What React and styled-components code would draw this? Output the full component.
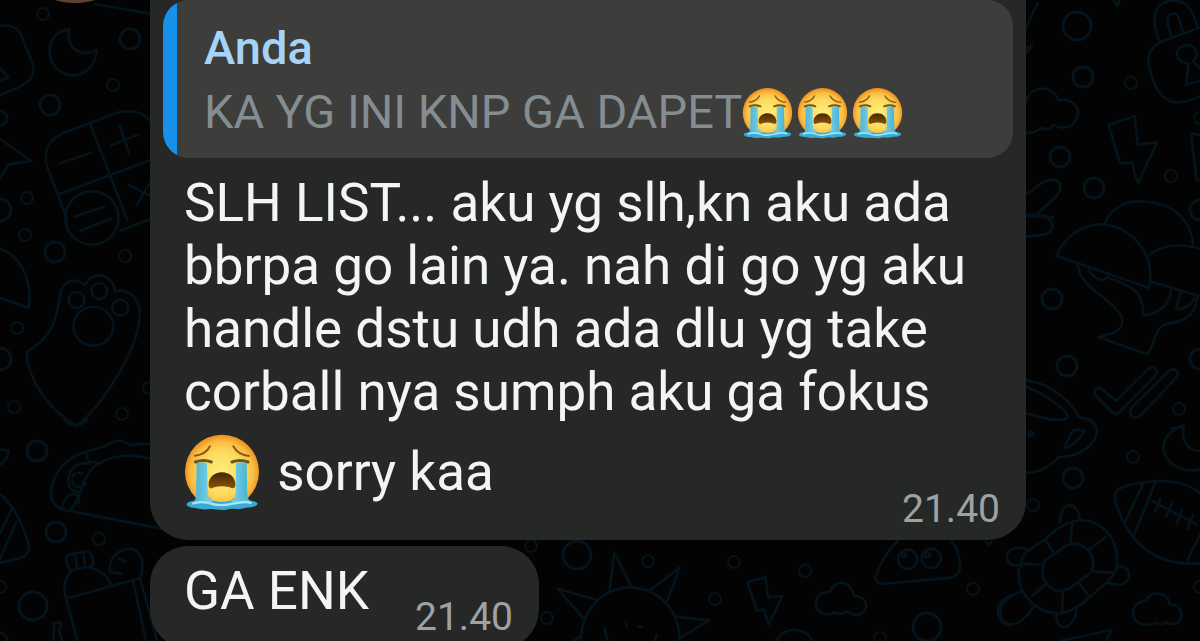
import React from 'react';
import styled, { createGlobalStyle } from 'styled-components';

const GlobalStyle = createGlobalStyle`
  * {
    box-sizing: border-box;
  }
  body {
    margin: 0;
    background-color: #030303;
    font-family: Roboto, 'Liberation Sans', sans-serif;
  }
  p {
    margin: 0;
  }
`;

const Chat = styled.main`
  position: relative;
  height: 100vh;
  overflow: hidden;
`;

const StyledWallpaper = styled.svg`
  position: absolute;
  top: 0;
  left: 0;
  width: 100%;
  height: 100%;
  fill: none;
  stroke: #04131c;
  stroke-width: 8;
  stroke-linecap: round;
  stroke-linejoin: round;
`;

const Messages = styled.div`
  position: relative;
  display: flex;
  flex-direction: column;
  align-items: flex-start;
  gap: 6px;
  padding: 0 14% 0 12.5%;
`;

const Bubble = styled.article`
  max-width: 876px;
  padding-bottom: 7px;
  background-color: #262827;
  border-radius: ${props => props.$continued ? '0 0 38px 38px' : '38px'};
`;

const Quote = styled.blockquote`
  margin: 0 13px;
  padding: 16px 26px 14px 41px;
  background: linear-gradient(to right, #1791ea 14px, #3d3d3b 14px);
  border-radius: 26px;
  line-height: 64px;
`;

const Author = styled.p`
  color: #a5d4f7;
  font-size: 47px;
  font-weight: 500;
`;

const QuoteText = styled.p`
  color: #848d91;
  font-size: 47px;
`;

const Body = styled.div`
  display: ${props => props.$short ? 'flex' : 'grid'};
  justify-content: space-between;
  align-items: end;
  gap: 46px;
  padding: 14px 26px 0 34px;
  > * {
    grid-area: 1 / 1;
  }
`;

const Text = styled.p`
  padding-bottom: ${props => props.$short ? '18px' : '22px'};
  color: #f3f5f5;
  font-size: 53px;
  line-height: 63px;
`;

const Time = styled.time`
  justify-self: end;
  color: #a0a2a2;
  font-size: 39px;
  line-height: 48px;
`;

const StyledEmoji = styled.svg`
  width: ${props => props.$large ? '76px' : '51px'};
  height: ${props => props.$large ? '78px' : '52px'};
  margin: ${props => props.$large ? '9px 4px 0 0' : '0 4px 0 0'};
  vertical-align: ${props => props.$large ? '-21px' : '-11px'};
`;

function Emoji({ large }) {
  return (
    <StyledEmoji $large={large} viewBox="102 66 228 234" role="img" aria-label="😭">
      <defs>
        <radialGradient id="face" cx="50%" cy="52%" r="52%">
          <stop offset="0" stopColor="#fff07a" />
          <stop offset=".55" stopColor="#fbdc60" />
          <stop offset=".82" stopColor="#f9bd42" />
          <stop offset="1" stopColor="#ee8d1c" />
        </radialGradient>
        <linearGradient id="mouth" x1="0" y1="0" x2="0" y2="1">
          <stop offset="0" stopColor="#4a2503" />
          <stop offset="1" stopColor="#87540c" />
        </linearGradient>
        <linearGradient id="tear" x1="0" y1="0" x2="1" y2="0">
          <stop offset="0" stopColor="#48b2d2" />
          <stop offset=".5" stopColor="#9ce3ef" />
          <stop offset="1" stopColor="#3eaed0" />
        </linearGradient>
      </defs>
      <circle cx="216" cy="182" r="111" fill="url(#face)" />
      <path d="M135 134Q167 131 180 106M250 106Q264 132 297 135" fill="none" stroke="#8d5a15" strokeWidth="6" strokeLinecap="round" />
      <path d="M136 153Q162 144 184 153M246 153Q270 144 294 153" fill="none" stroke="#6d5423" strokeWidth="9" strokeLinecap="round" />
      <path d="M112 276C120 268 132 273 140 264C148 250 176 251 184 266C199 274 233 274 247 266C256 251 285 251 293 264C301 272 314 267 322 276C326 285 306 290 286 290C264 298 245 290 229 296C209 299 190 292 174 295C151 297 143 290 126 290C112 287 106 282 112 276Z" fill="#39a9d5" />
      <path d="M140 157Q155 151 171 157L173 250Q177 266 190 272Q157 281 130 272Q140 265 138 250ZM258 157Q272 151 290 157L292 250Q292 265 302 272Q275 281 242 272Q257 264 257 249Z" fill="url(#tear)" />
      <path d="M176 225C174 199 194 184 216 184S258 199 256 225C254 234 246 233 239 229Q216 222 193 229C185 234 178 234 176 225Z" fill="url(#mouth)" />
      <path d="M130 277Q159 269 184 278T249 278T302 276" fill="none" stroke="#a9e6f2" strokeWidth="7" strokeLinecap="round" />
    </StyledEmoji>
  );
}

// [x, y, r] of the loose bubbles between the doodles
const dots = [
  [43, 14, 6], [130, 39, 10], [113, 85, 6], [50, 105, 10], [0, 118, 7], [27, 198, 6], [0, 210, 11],
  [25, 235, 6], [55, 252, 10], [125, 256, 6], [17, 328, 6], [0, 359, 11], [14, 407, 6], [122, 414, 6], [149, 388, 6],
  [37, 451, 10], [56, 532, 10], [99, 539, 6], [33, 606, 14], [0, 587, 6], [0, 640, 7],
  [1077, 26, 14], [1083, 77, 10], [1131, 83, 6], [1060, 157, 10], [1094, 188, 10], [1171, 176, 6], [1200, 118, 6],
  [1052, 299, 10], [1067, 366, 10], [1179, 409, 6], [1200, 210, 10], [1200, 359, 10], [1133, 457, 6],
  [1073, 478, 10], [1033, 505, 6], [1200, 587, 6],
  [531, 546, 6], [577, 555, 14], [648, 561, 6], [734, 562, 6], [805, 571, 6], [715, 599, 6], [547, 618, 6],
  [973, 589, 6], [927, 627, 14], [880, 638, 6],
];

function Wallpaper() {
  return (
    <StyledWallpaper viewBox="0 0 1200 641" preserveAspectRatio="xMidYMin slice" aria-hidden="true">
      <circle cx="75" cy="-65" r="68" fill="#60402f" stroke="none" />
      {dots.map(([x, y, r]) => <circle key={`${x}-${y}`} cx={x} cy={y} r={r} style={{ strokeWidth: r > 6 ? 3 : 2 }} />)}
      {/* calculator, moon, message */}
      <g transform="scale(.3333)">
        <path d="M285 12L448 41M0 78C45 70 62 93 72 128L99 192C104 234 84 249 57 261L0 286M0 207L26 232L0 243" />
        <path d="M208 88C168 91 147 124 149 159C153 202 187 225 222 226C260 224 287 193 291 150C240 174 196 144 208 88Z" />
        <path d="M0 417L94 483L25 493L0 535" />
        <path d="M450 362C425 332 381 326 339 343L199 395C148 414 130 446 140 496L202 660M271 373L382 660M177 583L450 481" />
        <path d="M181 490L273 458M331 437L416 403M358 375L389 463M387 555L450 587M450 548L410 617M222 650L311 621" />
        <circle cx="276" cy="654" r="80" />
        <path d="M240 693L332 656M360 692L450 658" />
      </g>
      {/* paw, melon */}
      <g transform="translate(0 210) scale(.3333)">
        <path d="M0 116C67 139 98 221 86 293L0 264" />
        <path d="M80 426C158 382 170 326 180 257C185 213 222 199 255 226C276 181 340 187 345 244C390 234 426 269 418 328C408 433 301 592 230 648C148 603 82 510 80 426Z" />
        <ellipse cx="280" cy="349" rx="60" ry="58" />
        <circle cx="230" cy="270" r="24" />
        <circle cx="298" cy="243" r="24" />
        <circle cx="361" cy="293" r="24" />
      </g>
      {/* taco, bottle, cone */}
      <g transform="translate(0 420) scale(.3333)">
        <path d="M192 0Q227 29 262 0M0 88L26 92Q24 117 0 134M0 221C45 260 67 313 84 366C94 398 75 410 54 416L0 428M36 266L0 340M50 303L0 417" />
        <path d="M184 268C145 251 149 210 166 170C187 124 223 106 260 95C285 88 302 84 325 73C348 57 369 59 390 76Q413 68 450 72M184 268L500 329M213 267C248 230 238 185 281 141C326 104 393 100 450 116M260 95Q257 119 270 125Q290 122 295 135M270 130C217 124 200 160 207 200Q213 213 237 216M184 268Q194 225 218 222Q244 226 236 250" />
        <path d="M247 160A22 22 0 1 0 258 188" strokeDasharray="13 9" />
        <path d="M205 447L198 415Q199 404 211 403L262 395Q274 396 276 410L280 431Q278 439 268 440L216 450ZM226 406L231 442M250 401L255 438M215 452C200 468 189 488 194 518L232 663M269 443C303 450 322 466 332 492M201 535L420 475M330 453C327 407 361 383 399 387C431 403 433 444 420 475L472 663M400 486L438 663M354 414L375 424M330 456L363 461M160 608L185 608L177 630L187 663M163 610L160 663" />
      </g>
      {/* lock, bolt, cloud */}
      <g transform="translate(1000) scale(.3333)">
        <path d="M80 80L112 10M80 145Q96 129 95 139L80 160M340 0L353 17L360 0M478 121C456 69 455 15 503 4C550-6 575 16 592 80M600 83L490 123Q439 145 446 191C454 233 470 277 499 298Q527 320 600 290M513 106L503 70C498 37 532 30 537 58L549 95" />
        <path d="M567 190C531 190 521 155 544 140C571 125 593 145 589 170L580 184L600 205M567 190L557 256L600 242" />
        <path d="M80 305C88 253 163 253 175 302C212 290 245 323 230 355C220 384 182 389 162 375Q142 395 123 384Q101 402 80 398" />
        <path d="M326 375L404 348L413 433L471 427L415 548Q407 542 398 489L360 490ZM600 405L573 401L590 541L600 541" />
        <path d="M80 581L95 574C137 531 166 533 180 551C190 583 148 606 111 643L160 653M80 645L111 643" />
      </g>
      {/* umbrellas, ticks */}
      <g transform="translate(1000 210) scale(.3333)">
        <path d="M80 17L137 20C169 42 161 67 130 74L80 80" />
        <path d="M170 137C198 71 254 40 313 43C403 55 468 139 447 234ZM315 39C337-17 391-31 445-24C529-17 575 40 579 103M450 134C489 103 541 100 600 116M450 214L600 259" />
        <path d="M233 165C244 239 333 261 365 319C376 366 334 369 296 382L440 433C463 418 462 347 502 341C546 335 585 324 592 263M265 175C280 207 309 219 325 200M332 206C391 230 427 233 431 317C473 312 511 285 513 237M541 248L528 298C560 297 574 282 584 264" />
        <path d="M288 559C274 529 301 532 310 541L348 573L443 479C462 459 482 486 461 502L355 609Q344 615 337 607ZM397 590L505 484C526 470 544 484 526 506L420 618C399 633 380 611 397 590Z" />
        <path d="M80 511C157 522 218 579 236 622Q277 625 288 654M80 531C137 553 210 604 201 624C181 638 130 625 80 611" />
      </g>
      {/* fish, turtle, football */}
      <g transform="translate(1000 420) scale(.3333)">
        <path d="M80 158C114 159 153 139 177 111C239 113 294 70 290 28Q286 7 270 0M194 81L216 36Q221 26 252 32Q238 65 202 83ZM515 25Q536 25 554 18" />
        <circle cx="93" cy="42" r="7" fill="#04131c" />
        <path d="M552 16C513 27 486 59 491 91C506 142 550 157 600 149M552 16C542 64 565 92 600 93" />
        <path d="M76 398L135 359C176 318 219 293 266 303C327 319 359 376 350 448Q340 470 323 485L269 532C221 575 179 594 125 569C69 539 41 479 64 427Q66 411 76 398Z" />
        <path d="M136 419L199 378C237 357 285 391 279 440Q275 459 257 470L207 506C161 530 117 486 130 435Q132 425 136 419M217 307L211 370M135 359L162 400M64 430L126 435M97 528L134 495M188 516L187 579M236 486L267 530M279 454L339 458M267 389L317 351" />
        <path d="M181 308C177 245 232 234 240 301M80 388C30 371 4 410 32 433L66 440M350 439C400 435 397 489 359 495L325 489M169 580C163 636 221 638 230 568M66 514C20 530-5 556 2 591C26 630 64 615 100 562M180 663L335 630L318 663" />
        <path d="M600 219C547 177 472 175 386 196C352 203 340 215 346 247C374 330 433 443 600 430M431 187L376 304M466 187L400 352M457 243L589 313M482 235L466 275M515 251L499 290M547 268L531 309M579 286L562 326M600 344L562 421" />
        <path d="M414 609C387 582 397 545 440 542C447 510 504 512 509 553C542 550 558 591 531 609Q507 617 496 606Q480 619 468 608Q446 620 414 609Z" />
      </g>
      {/* sun, bolt, cloud, ghost */}
      <g transform="translate(530 500) scale(.3333)">
        <path d="M153 423C154 332 213 264 302 262C393 268 447 330 449 423M238 273L253 159L304 260M362 269L450 202L411 304M438 350L538 361L450 413M160 355L82 266L202 300M130 423L150 409M225 383Q225 405 234 423M380 405L374 423M288 368L290 378M325 380L336 380" />
        <path d="M652 247L706 231L714 291L757 288L716 373L702 328L681 332Z" />
        <path d="M872 337C846 319 854 276 900 275C915 234 966 242 971 286C1015 288 1021 333 987 344Q967 347 951 334Q936 348 914 337Q893 350 872 337Z" />
        <path d="M1107 120C1070 154 1046 196 1036 234Q1036 247 1058 252L1265 233Q1292 224 1290 195Q1286 145 1263 120M740 423C754 378 829 378 848 423M1367 125L1377 136L1384 125M1440 287Q1402 301 1404 343Q1413 372 1440 377" />
        <circle cx="1133" cy="178" r="29" />
        <circle cx="1204" cy="175" r="29" />
        <circle cx="1122" cy="166" r="7" />
        <circle cx="1192" cy="164" r="7" />
      </g>
    </StyledWallpaper>
  );
}

export default function App() {
  return (
    <>
      <GlobalStyle />
      <Chat>
        <Wallpaper />
        <Messages>
          <Bubble $continued>
            <Quote>
              <Author>Anda</Author>
              <QuoteText>KA YG INI KNP GA DAPET<Emoji /><Emoji /><Emoji /></QuoteText>
            </Quote>
            <Body>
              <Text>
                SLH LIST... aku yg slh,kn aku ada bbrpa go lain ya. nah di go yg aku
                handle dstu udh ada dlu yg take corball nya sumph aku ga fokus{' '}
                <Emoji large /> sorry kaa
              </Text>
              <Time>21.40</Time>
            </Body>
          </Bubble>
          <Bubble>
            <Body $short>
              <Text $short>GA ENK</Text>
              <Time>21.40</Time>
            </Body>
          </Bubble>
        </Messages>
      </Chat>
    </>
  );
}
